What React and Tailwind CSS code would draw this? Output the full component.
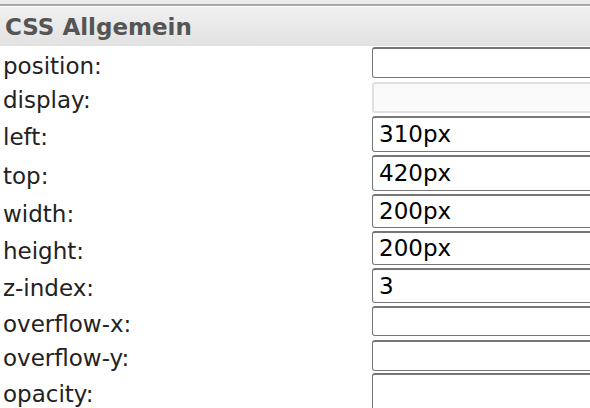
import React from 'react';

const rows = [
  { label: 'position:', value: '', h: 35, ih: 31 },
  { label: 'display:', value: '', h: 34, ih: 31, disabled: true },
  { label: 'left:', value: '310px', h: 39, ih: 36 },
  { label: 'top:', value: '420px', h: 39, ih: 36 },
  { label: 'width:', value: '200px', h: 37, ih: 34 },
  { label: 'height:', value: '200px', h: 37, ih: 34 },
  { label: 'z-index:', value: '3', h: 38, ih: 35 },
  { label: 'overflow-x:', value: '', h: 34, ih: 30 },
  { label: 'overflow-y:', value: '', h: 33, ih: 31 },
  { label: 'opacity:', value: '', h: 40, ih: 40 },
];

export default function App() {
  return (
    <div className="w-[590px] h-[408px] overflow-hidden bg-white font-['DejaVu_Sans',Verdana,sans-serif] text-[23px]">
      {/* top strip */}
      <div className="h-[4px] bg-[#ebebeb]" />
      <div className="h-[2px] bg-[#a8a8a8]" />
      <div className="h-[1px] bg-white" />

      {/* section header */}
      <div className="h-[39px] flex items-center pl-[5px] bg-gradient-to-b from-[#f0f0f0] to-[#e2e2e2]">
        <span className="font-bold text-[#555555] leading-none pt-[2px]">CSS Allgemein</span>
      </div>

      <div className="h-[1px]" />

      {rows.map((r) => (
        <div key={r.label} className="flex" style={{ height: r.h }}>
          <div className="w-[372px] shrink-0 flex items-center pl-[3px] pt-[3px] text-[#222222] leading-none">
            {r.label}
          </div>
          <div
            className={`w-[240px] shrink-0 flex items-center pl-[6px] rounded-[3px] leading-none text-black ${
              r.disabled
                ? 'bg-[#fafafa] border-2 border-[#e0e0e0]'
                : 'bg-white border border-t-2 border-[#767676]'
            }`}
            style={{ height: r.ih }}
          >
            {r.value}
          </div>
        </div>
      ))}
    </div>
  );
}
